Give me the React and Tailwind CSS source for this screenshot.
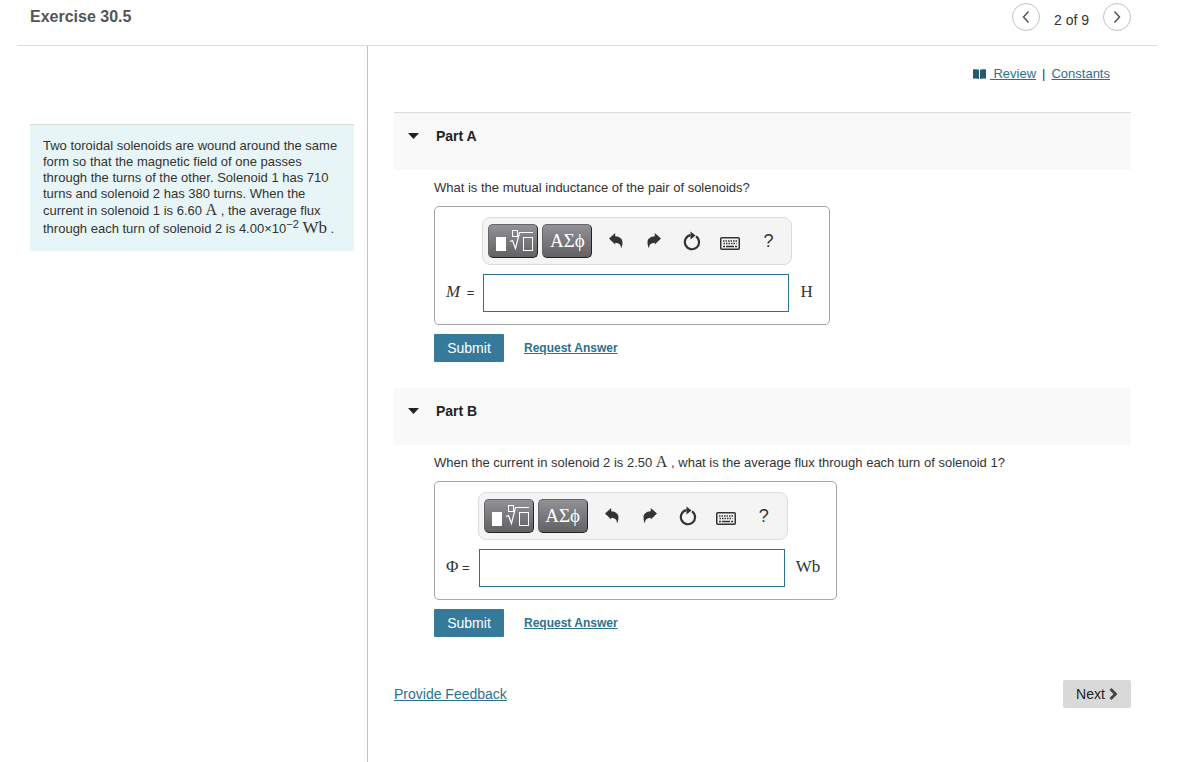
import React, { useState } from 'react';

const linkColor = 'text-[#2b7291] underline';

const Serif = ({ children, size = 'text-[17px]', className = '' }) => (
  <span className={`font-['Liberation_Serif',serif] leading-none ${size} ${className}`}>{children}</span>
);

const TemplateIcon = () => (
  <svg width="40" height="24" viewBox="0 0 40 24" fill="none" stroke="white" className="shrink-0">
    <rect x="3" y="8" width="10" height="14" fill="white" stroke="none" />
    <rect x="19.500" y="1.500" width="5" height="6" />
    <path d="M17 12.500l2.500-1 3 8L26.500 3.500H40" strokeWidth="1.200" />
    <rect x="30.500" y="8.500" width="9" height="13" />
  </svg>
);

const UndoIcon = ({ flip = false }) => (
  <svg width="14" height="16" viewBox="0 0 14 16" fill="#333" className={flip ? '-scale-x-100' : ''}>
    <path d="M0 5.500L6.200 0v3.200C11 3.400 13.500 6 13.500 9.500c0 2.500-.7 4.300-1.500 6 .1-3.500-1.700-5.600-5.800-5.700V11.500z" />
  </svg>
);

const ResetIcon = () => (
  <svg width="18" height="20" viewBox="0 0 18 20" fill="none">
    <path d="M13 5.300A7.100 7.100 0 1 1 7.500 4.200" stroke="#333" strokeWidth="2.200" />
    <path d="M7.500 0.500l5 4-5 4z" fill="#333" />
  </svg>
);

const KeyboardIcon = () => (
  <svg width="20" height="13" viewBox="0 0 20 13" fill="none" stroke="#333">
    <rect x="0.750" y="0.750" width="18.500" height="11.500" rx="1" strokeWidth="1.500" />
    <path d="M3 4h14M3.500 6.500h13" strokeWidth="1.500" strokeDasharray="1.500 1" />
    <path d="M3 9.500h2M6 9.500h8M15 9.500h2" strokeWidth="1.500" />
  </svg>
);

const toolButton =
  'flex h-[34px] w-[50px] shrink-0 items-center justify-center rounded-[5px] border border-t-[#666] border-l-[#666] border-r-[#222] border-b-[#222] bg-linear-to-b from-[#929197] to-[#626264] text-white';
const iconButton = 'flex h-[34px] w-[38px] shrink-0 items-center justify-center';

const Toolbar = () => (
  <div className="flex items-center rounded-lg border border-[#dcdcdc] bg-[#f4f4f4] px-[5px] py-[6px]">
    <button type="button" aria-label="Templates" className={toolButton}>
      <TemplateIcon />
    </button>
    <button type="button" aria-label="Symbols" className={`${toolButton} mr-[5px] ml-1 pb-0.5`}>
      <Serif size="text-[19px]">ΑΣϕ</Serif>
    </button>
    <button type="button" aria-label="Undo" className={iconButton}>
      <UndoIcon />
    </button>
    <button type="button" aria-label="Redo" className={iconButton}>
      <UndoIcon flip />
    </button>
    <button type="button" aria-label="Reset" className={iconButton}>
      <ResetIcon />
    </button>
    <button type="button" aria-label="Keyboard shortcuts" className={`${iconButton} pt-1`}>
      <KeyboardIcon />
    </button>
    <button type="button" aria-label="Help" className={`${iconButton} text-lg text-[#333]`}>
      ?
    </button>
  </div>
);

const Part = ({ id, title, question, symbol, unit, headerClass = '' }) => {
  const [answer, setAnswer] = useState('');

  return (
    <section>
      <h2 className={`bg-[#f9f9f9] px-[14px] pt-[13px] pb-6 ${headerClass}`}>
        <button type="button" className="flex items-center text-sm leading-5 font-bold text-[#222]">
          <svg width="11" height="6" viewBox="0 0 11 6" className="mr-[17px]">
            <path d="M0 0h11L5.500 6z" fill="#222" />
          </svg>
          {title}
        </button>
      </h2>
      <div className="pt-[9px] pl-10">
        <p className="mb-[9px] h-[18px] text-[13px] leading-[18px]">{question}</p>
        <div className="grid w-fit grid-cols-[auto_310px_auto] items-center gap-x-2 gap-y-[9px] rounded-[5px] border border-[#a6a6a6] pt-[10px] pr-4 pb-3 pl-[11px]">
          <div className="col-start-2">
            <Toolbar />
          </div>
          <label htmlFor={id} className="col-start-1 text-[13px] leading-5 whitespace-nowrap">
            {symbol} =
          </label>
          <div className="flex px-px">
            <input
              id={id}
              type="text"
              value={answer}
              onChange={(e) => setAnswer(e.target.value)}
              className="h-[38px] w-[306px] border border-[#2b7291] bg-white px-2 text-base outline-none"
            />
          </div>
          <Serif className="pb-1">{unit}</Serif>
        </div>
        <div className="mt-[9px] flex items-center gap-5">
          <button type="submit" className="h-7 w-[70px] rounded-[1px] bg-[#357a9b] text-sm text-white">
            Submit
          </button>
          <a href="#answer" className={`text-xs leading-4 font-bold ${linkColor}`}>
            Request Answer
          </a>
        </div>
      </div>
    </section>
  );
};

const pagerButton = 'flex h-7 w-7 items-center justify-center rounded-full border border-[#c2c2c2]';

const App = () => {
  return (
    <div className="flex min-h-screen flex-col bg-white font-['Liberation_Sans',Arial,sans-serif] text-[#333]">
      <header className="mr-[21px] ml-[17px] flex h-[46px] items-start justify-between border-b border-[#ddd] pr-[26px] pl-[13px]">
        <h1 className="pt-[7px] text-base leading-5 font-bold text-[#555]">Exercise 30.5</h1>
        <nav className="flex items-center pt-[3px]">
          <button type="button" aria-label="Previous item" className={pagerButton}>
            <svg width="8" height="12" viewBox="0 0 8 12" fill="none" stroke="#555" strokeWidth="1.500">
              <path d="M6.500 0.500L1.500 6l5 5.500" />
            </svg>
          </button>
          <span className="mx-[14px] pt-1.5 text-sm leading-5">2 of 9</span>
          <button type="button" aria-label="Next item" className={pagerButton}>
            <svg width="8" height="12" viewBox="0 0 8 12" fill="none" stroke="#555" strokeWidth="1.500">
              <path d="M1.500 0.500l5 5.500-5 5.500" />
            </svg>
          </button>
        </nav>
      </header>

      <div className="flex flex-1">
        <aside className="w-[368px] shrink-0 border-r border-[#bcc3d2] pt-[78px] pr-[13px] pl-[30px]">
          <p className="border-t border-[#d8dcdc] bg-[#e8f5f6] pt-[13px] pr-3 pb-3 pl-[13px] text-[13px] leading-4">
            Two toroidal solenoids are wound around the same form so that the magnetic field of one passes through the
            turns of the other. Solenoid 1 has 710 turns and solenoid 2 has 380 turns. When the current in solenoid 1 is
            6.60 <Serif size="text-base">A</Serif> , the average flux through each turn of solenoid 2 is{' '}
            <span className="leading-5 whitespace-nowrap">
              4.00×10<sup className="text-[11px] leading-none">−2</sup> <Serif>Wb</Serif> .
            </span>
          </p>
        </aside>

        <main className="flex-1 pr-[47px] pl-[26px]">
          <div className="flex h-[66px] items-start justify-end pt-[18px] pr-[21px] text-[13px] leading-5">
            <svg width="13" height="10" viewBox="0 0 13 10" fill="#235a70" className="mt-[5px] mr-1">
              <path d="M0 .5C2 0 4.500 0 6 .7V10C4.500 9.300 2 9.300 0 9.700zM7 .7c1.500-.7 4-.7 6-.2v9.200c-2-.4-4.500-.4-6 .3z" />
            </svg>
            <a href="#review" className={`whitespace-pre ${linkColor}`}>
              {' Review'}
            </a>
            <span className="mx-[6px]">|</span>
            <a href="#constants" className={linkColor}>
              Constants
            </a>
          </div>

          <Part
            id="part-a"
            title="Part A"
            headerClass="border-t border-[#ddd]"
            question="What is the mutual inductance of the pair of solenoids?"
            symbol={<Serif className="mr-[3px] italic">M</Serif>}
            unit="H"
          />
          <div className="h-[26px]" />
          <Part
            id="part-b"
            title="Part B"
            question={
              <>
                When the current in solenoid 2 is 2.50 <Serif size="text-base">A</Serif> , what is the average flux
                through each turn of solenoid 1?
              </>
            }
            symbol={<Serif>Φ</Serif>}
            unit="Wb"
          />

          <footer className="mt-[43px] flex items-center justify-between">
            <a href="#feedback" className={`text-sm ${linkColor}`}>
              Provide Feedback
            </a>
            <button
              type="button"
              className="flex h-7 w-[68px] items-center justify-center gap-1 rounded-[2px] bg-[#d9d9d9] text-sm text-[#222]"
            >
              Next
              <svg width="9" height="12" viewBox="0 0 9 12" fill="none" stroke="#444" strokeWidth="2.800">
                <path d="M1.500 1L6.500 6l-5 5" />
              </svg>
            </button>
          </footer>
        </main>
      </div>
    </div>
  );
};

export default App;
